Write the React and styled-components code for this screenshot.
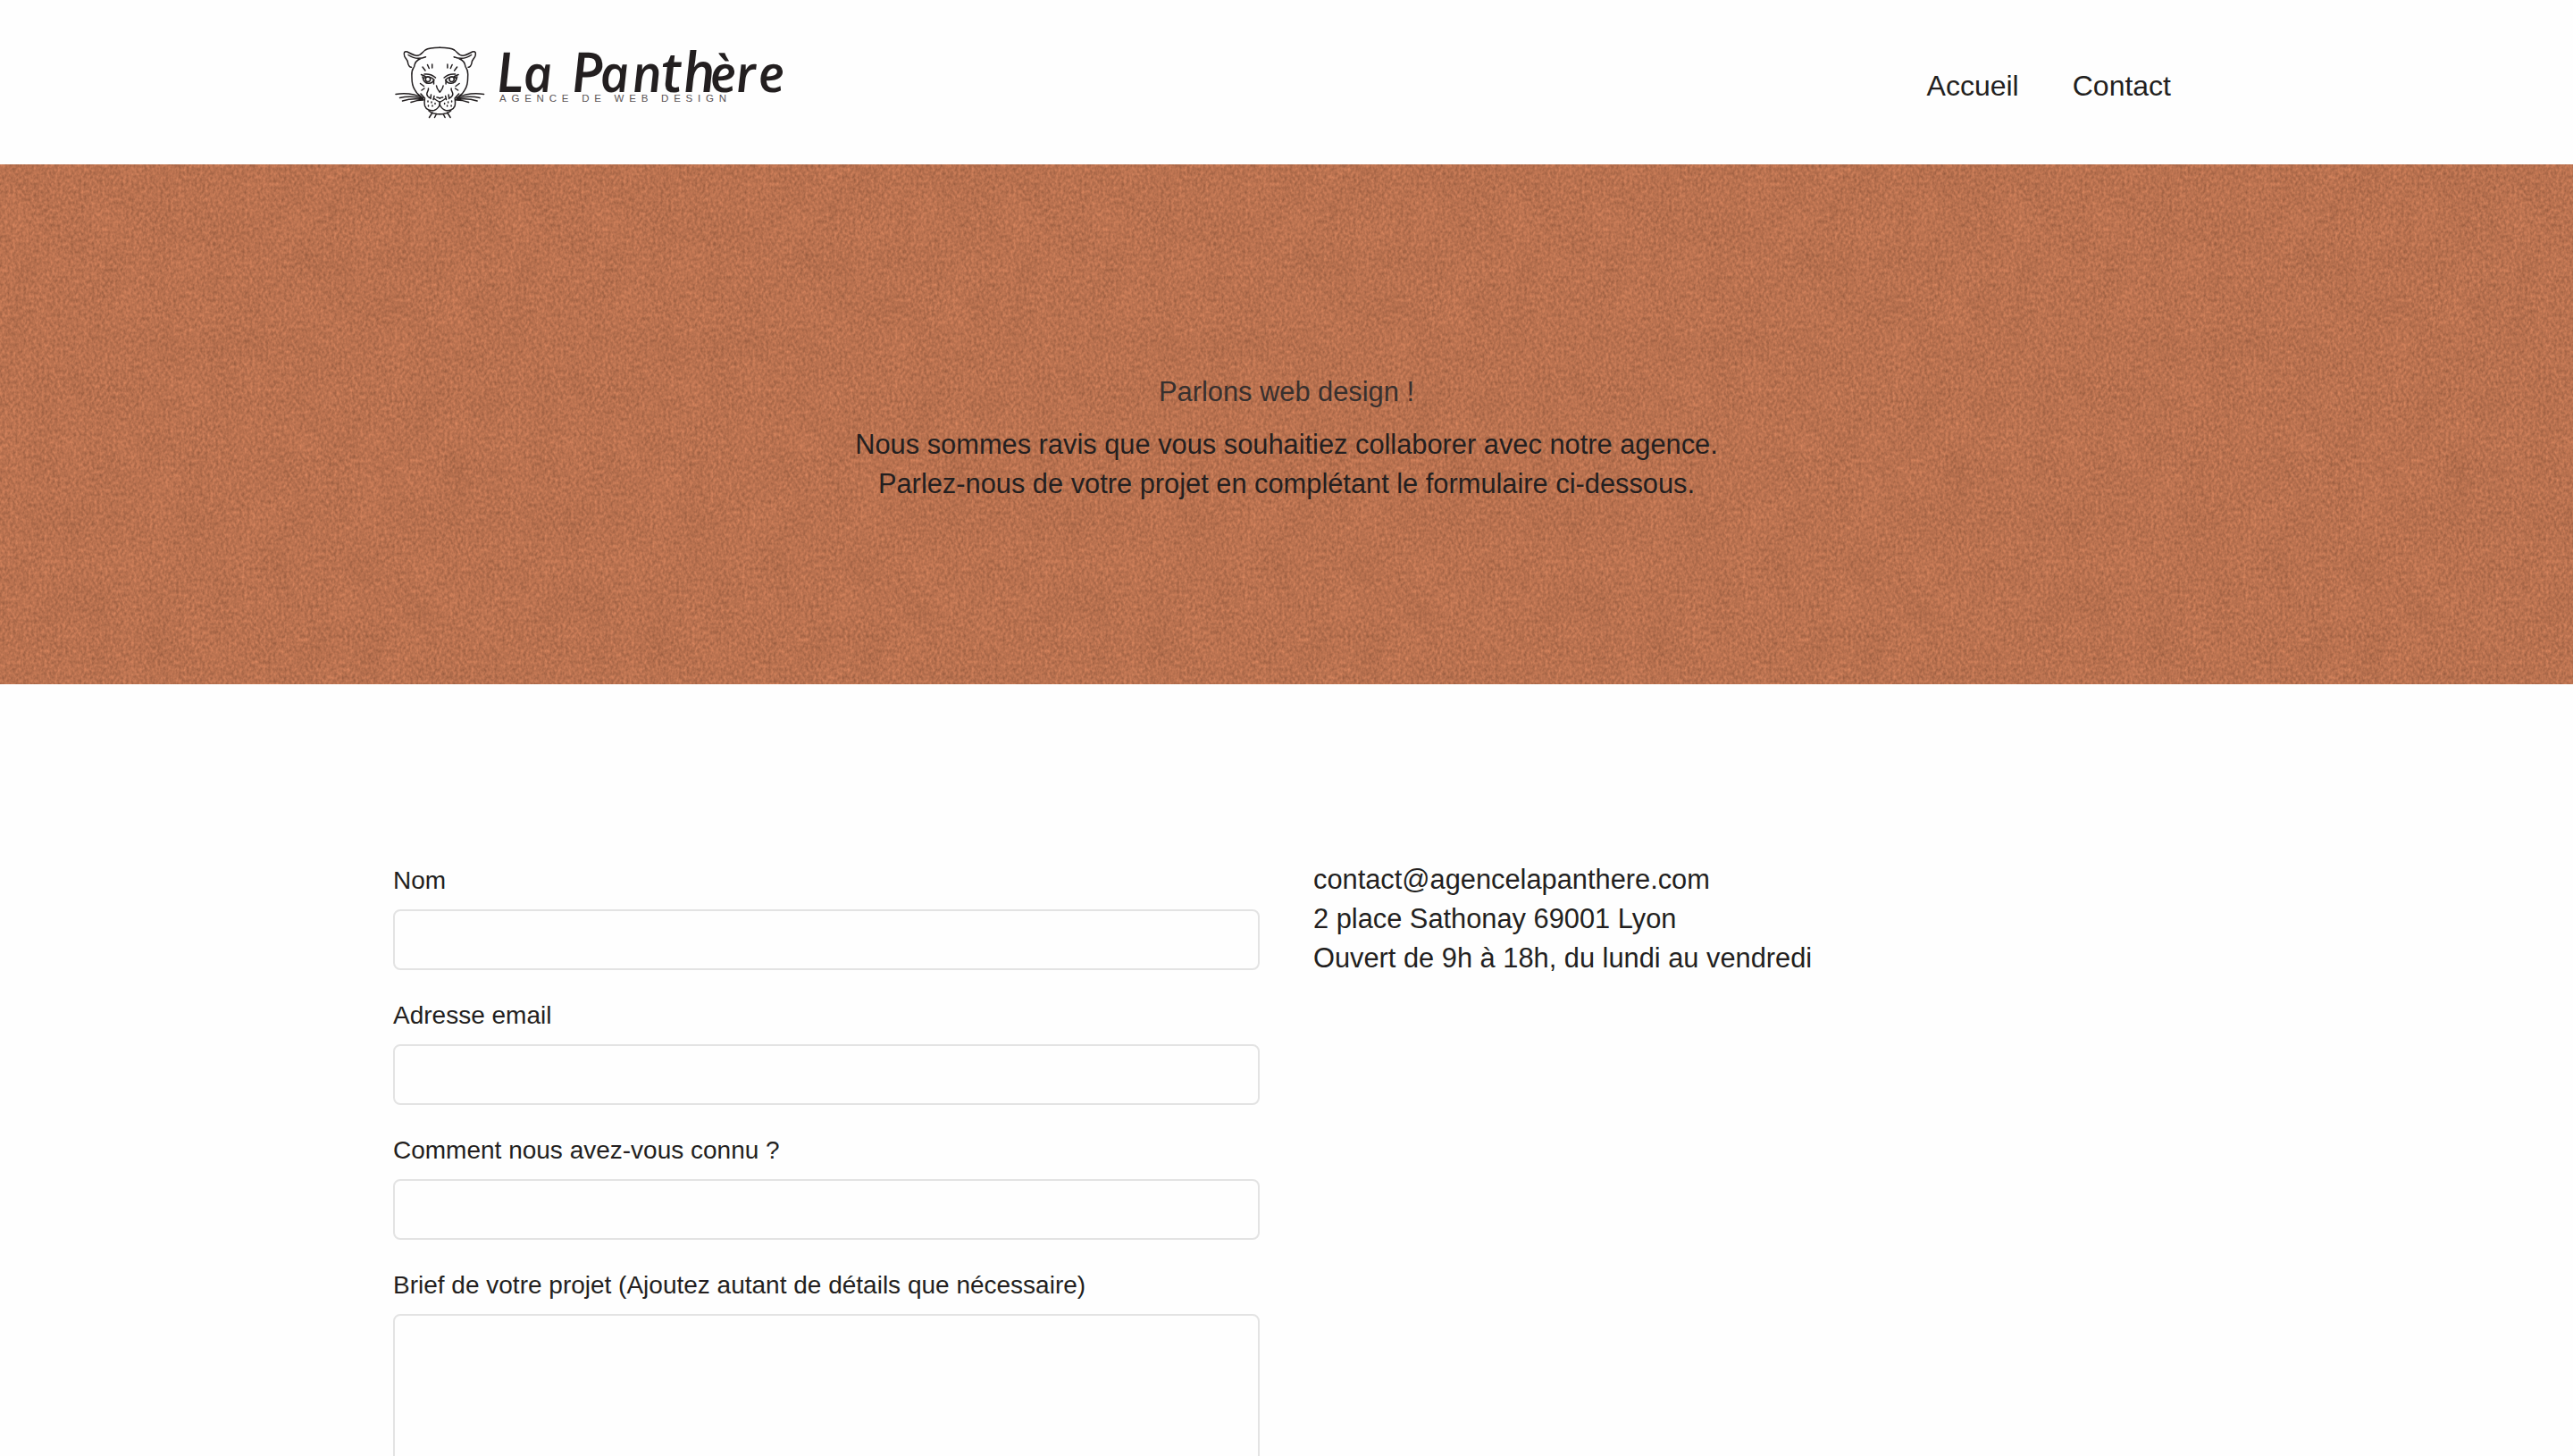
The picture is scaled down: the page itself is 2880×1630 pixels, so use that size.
import React from "react";
import styled, { createGlobalStyle } from "styled-components";

const Global = createGlobalStyle`
  *, *::before, *::after { box-sizing: border-box; }
  body {
    margin: 0;
    background: #fefefe;
    color: #231f20;
    font-family: "Liberation Sans", Arial, Helvetica, sans-serif;
  }
`;

const Page = styled.div`
  height: 1630px;
  overflow: hidden;
`;

const Container = styled.div`
  width: 2000px;
  margin: 0 auto;
`;

const Header = styled.header`
  height: 184px;
`;

const HeaderInner = styled(Container)`
  display: flex;
  justify-content: space-between;
  align-items: flex-start;
`;

const Logo = styled.a`
  display: block;
  height: 184px;
`;

const Nav = styled.nav`
  display: flex;
  gap: 60px;
  padding: 72px 10px 0 0;
`;

const NavLink = styled.a`
  font-size: 32px;
  line-height: 48px;
  color: #231f20;
`;

const Hero = styled.section`
  position: relative;
  height: 582px;
  padding-top: 233px;
  background: #bb7350;
  text-align: center;
`;

const Grain = styled.svg`
  position: absolute;
  inset: 0;
  width: 100%;
  height: 100%;
`;

const HeroText = styled.div`
  position: relative;
`;

const HeroTitle = styled.h1`
  margin: 0 0 15px;
  font-size: 30.8px;
  font-weight: 400;
  line-height: 44px;
  color: #38302e;
`;

const HeroCopy = styled.p`
  margin: 0;
  font-size: 30.8px;
  line-height: 44px;
`;

const Content = styled(Container)`
  display: grid;
  grid-template-columns: 970px 1fr;
  column-gap: 60px;
  padding-top: 197px;
`;

const Form = styled.form`
  display: flex;
  flex-direction: column;
  gap: 28px;
`;

const Field = styled.label`
  display: flex;
  flex-direction: column;
  gap: 10px;
  font-size: 28px;
  line-height: 45px;
`;

const Input = styled.input`
  height: 68px;
  border: 2px solid #e3e3e3;
  border-radius: 8px;
  background: #fefefe;
`;

const TextArea = styled.textarea`
  height: 300px;
  border: 2px solid #e3e3e3;
  border-radius: 8px;
  background: #fefefe;
  resize: none;
`;

const Details = styled.address`
  font-style: normal;
  font-size: 30.8px;
  line-height: 44px;
`;

const Wordmark = styled.text`
  font-family: "Open Sans", "Noto Sans", sans-serif;
  font-style: italic;
  font-weight: 600;
  font-size: 57px;
  fill: #231f20;
`;

const Tall = styled.tspan`
  font-size: 62px;
`;

const Tagline = styled.text`
  font-family: "Liberation Sans", Arial, sans-serif;
  font-size: 11.5px;
  fill: #5a5455;
`;

// Left half of the panther's face; the right half is its mirror image.
const half = (
  <>
    <path d="M62.300 23.300C55 23.300 50 23.500 46 26C42.500 28.500 41 32.500 36.500 32.300C33 32 29 29.500 26 28C22.500 27 21.500 29 22.800 33C24 36 26.500 37 26.500 40C26.800 43.500 29 45.500 30.500 45.300" />
    <path d="M27 31.500C32 35 38 37 46.500 33.700M41 35.500C35.500 37.500 34 41 33.500 45M32.800 46C30 50 31 53 31 57C31 62 31.500 66 34 70C36 74 38.500 76.500 41 78" />
    <path d="M43 45L46 49M48.500 42.500L50.300 46.500M53.700 42V46" />
    <path d="M41.500 53.500L46 55.500M45 53C50 52.500 55 54.500 57.500 57M43 56C44 61 46.500 63.500 50 63.300C53 63 55 61.500 55.500 59.500M44 57.500C48 55 53 56 56 59.500" />
    <circle cx="49" cy="58.800" r="2.700" />
    <path d="M40.500 63.500L44.500 66.500M42 71L45 69M55.500 60.500V64M58.500 66C59 70 60.500 71 62.300 73" />
    <path d="M49.500 69C50 72 47.500 72.500 47.800 75.500C48 78 50 79 51 79.500M52.500 76L52 80.500M56 77.500L55 81.500M62.300 84C60 84 57 81 55.500 80M59 79C60.500 78.500 61 80 62.300 80M62.300 84V87.500" />
    <path d="M41 75L45.500 80C45 83 44.800 86 45.500 88.500C47 93 52 94.500 56 93.500C59 92.500 61 90 62.300 87.500" />
    <path d="M13 75.500C23 74 34 75 43.500 79.500M17.500 79.500C27 77.500 35 78 43.500 80.500M20.500 83C28 80.500 36 80 44 81.500M30 84.500C34 83 39 82 44 82" />
    <path d="M50 94C53 97 57 97.800 62.300 97.800M54 96L50.500 101.500M58.500 97.500L56.500 101.500" />
    <path d="M49 83V84M53 84V85M49.500 88V89M54 88V89M57 85.500V86.500" />
  </>
);

function Brand() {
  return (
    <svg width="460" height="184" viewBox="0 0 460 184" role="img">
      <g fill="none" stroke="#231f20" strokeWidth="1.5" strokeLinecap="round" strokeLinejoin="round" transform="translate(-10 30)">
        <g>{half}</g>
        <g transform="translate(124.600 0) scale(-1 1)">{half}</g>
      </g>
      <g transform="translate(0 102.500) skewX(6)">
        <Wordmark x="117 147 180 201 233 269 302 326 356 385 410" y="0">
          <Tall>L</Tall>a <Tall>P</Tall>an<Tall>th</Tall>ère
        </Wordmark>
      </g>
      <Tagline x="119" y="113.500" textLength="254">AGENCE DE WEB DESIGN</Tagline>
    </svg>
  );
}

function PaperGrain() {
  return (
    <Grain aria-hidden="true">
      <defs>
        <filter id="grain" x="0" y="0" width="100%" height="100%" colorInterpolationFilters="sRGB">
          <feTurbulence type="fractalNoise" baseFrequency="0.34 0.24" numOctaves="2" seed="8" stitchTiles="stitch" result="fine" />
          <feTurbulence type="fractalNoise" baseFrequency="0.03 0.022" numOctaves="4" seed="3" stitchTiles="stitch" result="coarse" />
          <feComposite in="fine" in2="coarse" operator="arithmetic" k1="0" k2="0.86" k3="0.14" k4="0" />
          <feColorMatrix
            values="0.36 0 0 0 0.546
                    0.23 0 0 0 0.33
                    0.17 0 0 0 0.226
                    0 0 0 0 1"
          />
        </filter>
        <pattern id="paper" width="560" height="560" patternUnits="userSpaceOnUse">
          <rect width="560" height="560" filter="url(#grain)" />
        </pattern>
      </defs>
      <rect width="100%" height="100%" fill="url(#paper)" />
    </Grain>
  );
}

export default function App() {
  return (
    <Page>
      <Global />
      <Header>
        <HeaderInner>
          <Logo><Brand /></Logo>
          <Nav>
            <NavLink>Accueil</NavLink>
            <NavLink>Contact</NavLink>
          </Nav>
        </HeaderInner>
      </Header>
      <Hero>
        <PaperGrain />
        <HeroText>
          <HeroTitle>Parlons web design !</HeroTitle>
          <HeroCopy>
            Nous sommes ravis que vous souhaitiez collaborer avec notre agence.
            <br />
            Parlez-nous de votre projet en complétant le formulaire ci-dessous.
          </HeroCopy>
        </HeroText>
      </Hero>
      <Content>
        <Form>
          <Field>Nom<Input /></Field>
          <Field>Adresse email<Input /></Field>
          <Field>Comment nous avez-vous connu ?<Input /></Field>
          <Field>
            Brief de votre projet (Ajoutez autant de détails que nécessaire)
            <TextArea />
          </Field>
        </Form>
        <Details>
          contact@agencelapanthere.com
          <br />
          2 place Sathonay 69001 Lyon
          <br />
          Ouvert de 9h à 18h, du lundi au vendredi
        </Details>
      </Content>
    </Page>
  );
}
